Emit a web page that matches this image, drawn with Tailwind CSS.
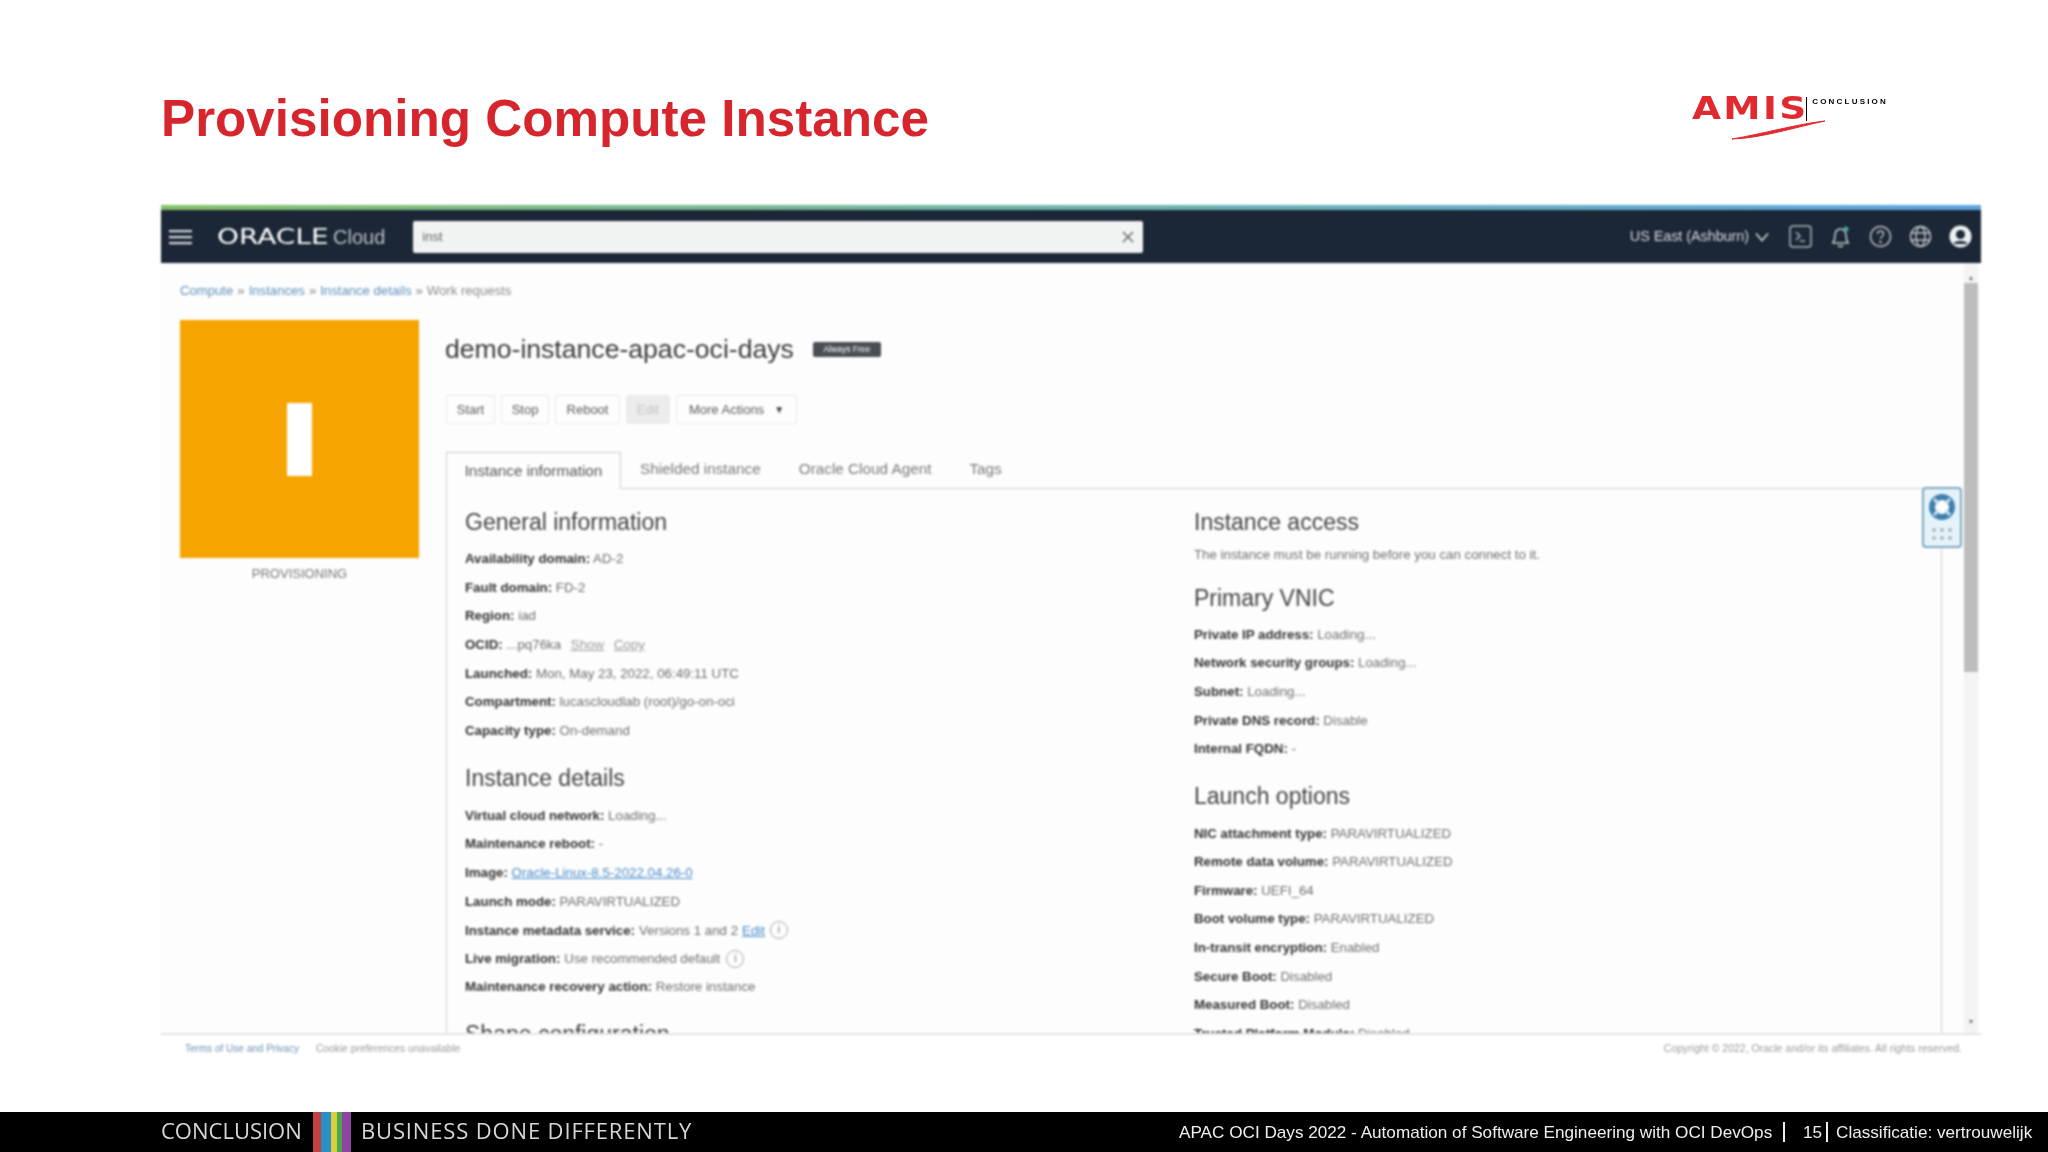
<!DOCTYPE html>
<html lang="en">
<head>
    <meta charset="UTF-8">
    <title>Provisioning Compute Instance</title>
    <script src="https://cdn.jsdelivr.net/npm/@tailwindcss/browser@4"></script>
</head>
<body class="bg-white">
<div class="w-[2048px] h-[1152px] overflow-hidden flex flex-col font-['Liberation_Sans',Arial,sans-serif]">

    <!-- slide header -->
    <div class="h-[205px] flex justify-between pl-[161px] pr-[160px]">
        <h1 class="mt-[87px] text-[51.2px] leading-[64px] font-bold text-[#d7252d]">Provisioning Compute Instance</h1>
        <!-- logo -->
        <div class="relative w-[196px] mt-[92px] h-[52px] blur-[0.4px]">
            <div class="flex items-start">
                <span class="w-[116px] text-[#e12a2f] text-[32px] leading-[32px] font-['DejaVu_Sans',sans-serif] font-bold tracking-[2px] scale-x-[1.17] origin-left">AMIS</span>
                <span class="w-px h-[24px] mt-[5px] bg-black"></span>
                <span class="ml-[5px] mt-[3px] text-[8px] leading-[14px] font-bold tracking-[2.2px] text-black">CONCLUSION</span>
            </div>
            <svg class="absolute left-0 top-0" width="196" height="52" viewBox="0 0 196 52"><path d="M40 47 C70 46 100 36 133 29 C105 32 70 42 40 47Z" fill="#e12a2f" stroke="#e12a2f" stroke-width="1"/></svg>
        </div>
    </div>

    <!-- console screenshot -->
    <div class="relative ml-[161px] w-[1820px] h-[907px] flex flex-col blur-[0.8px]">
        <div class="h-[5px] bg-gradient-to-r from-[#86c06a] to-[#5da4e0]"></div>

        <!-- top nav -->
        <div class="h-[53px] bg-[#1b2736] flex items-center text-[#d5d9dd]">
            <svg class="ml-[8px] w-[23px] h-[16px]" viewBox="0 0 23 16" fill="#d5d9dd"><rect width="23" height="2.2" y="1"/><rect width="23" height="2.2" y="7"/><rect width="23" height="2.2" y="13"/></svg>
            <span class="ml-[25px] mt-[2px] w-[116px] text-[21px] leading-none font-['DejaVu_Sans',sans-serif] text-white scale-x-[1.33] origin-left">ORACLE</span>
            <span class="mt-[1px] text-[20px] leading-none text-[#b9bfc5]">Cloud</span>
            <div class="ml-[28px] w-[730px] h-[32px] bg-[#f1f2f2] rounded-[2px] flex items-center justify-between pl-[9px] pr-[7px]">
                <span class="text-[13px] text-[#666]">inst</span>
                <svg class="w-[16px] h-[16px]" viewBox="0 0 16 16" stroke="#666" stroke-width="1.5" fill="none"><path d="M3 3l10 10M13 3L3 13"/></svg>
            </div>
            <span class="ml-[auto] text-[14.5px] text-[#d5d9dd] tracking-[-0.1px] mt-[1px]">US East (Ashburn)</span>
            <svg class="ml-[6px] w-[14px] h-[10px]" viewBox="0 0 14 10" fill="none" stroke="#d5d9dd" stroke-width="1.6"><path d="M1 1.500l6 7 6-7"/></svg>
            <svg class="ml-[20px] w-[23px] h-[23px]" viewBox="0 0 23 23" fill="none" stroke="#aeb4ba" stroke-width="1.5"><rect x="1" y="1" width="21" height="21" rx="3"/><path d="M7 7l4 4-4 4M11 16h5"/></svg>
            <svg class="ml-[18px] w-[21px] h-[23px]" viewBox="0 0 21 23" fill="none" stroke="#c3c8cd" stroke-width="1.6"><path d="M3 18c2-3 2-5 2-8 0-3 2-6 5.500-6s5.500 3 5.500 6c0 3 0 5 2 8z"/><path d="M8 20.500c1 1.500 4 1.500 5 0"/><circle cx="16" cy="4" r="2.500" fill="#47a896" stroke="none"/></svg>
            <svg class="ml-[18px] w-[23px] h-[23px]" viewBox="0 0 23 23" fill="none" stroke="#b8bdc3" stroke-width="1.5"><circle cx="11.500" cy="11.500" r="10"/><path d="M8.500 9c0-4 6-4 6 0 0 2.500-3 2.500-3 5"/><circle cx="11.500" cy="17" r="0.6"/></svg>
            <svg class="ml-[17px] w-[23px] h-[23px]" viewBox="0 0 23 23" fill="none" stroke="#c3c8cd" stroke-width="1.4"><circle cx="11.500" cy="11.500" r="10"/><ellipse cx="11.500" cy="11.500" rx="4.500" ry="10"/><path d="M2 8h19M2 15h19"/></svg>
            <svg class="ml-[17px] mr-[9px] w-[23px] h-[23px]" viewBox="0 0 23 23"><circle cx="11.500" cy="11.500" r="11" fill="#eef0f1"/><circle cx="11.500" cy="9.500" r="4.500" fill="#1b2736"/><path d="M4.500 19c1-4 13-4 14 0z" fill="#1b2736"/></svg>
        </div>

        <!-- body -->
        <div class="h-[770px] flex overflow-hidden bg-[#fdfdfd]">
            <div class="w-[1781px] pl-[19px]">
                <div class="h-[54px] pt-[1px] flex items-center gap-[4px] text-[13.15px] text-[#5e90bd]">
                    <span>Compute</span><span class="text-[#888]">»</span><span>Instances</span><span class="text-[#888]">»</span><span>Instance details</span><span class="text-[#888]">»</span><span class="text-[#8b8b8b]">Work requests</span>
                </div>
                <div class="flex">
                    <!-- state tile -->
                    <div class="w-[239px] mr-[27px] shrink-0">
                        <div class="h-[238px] mt-[3px] bg-[#f5a400] flex items-center justify-center">
                            <div class="w-[25px] h-[73px] bg-white mr-[1px]"></div>
                        </div>
                        <div class="mt-[8px] text-center text-[13px] leading-[16px] text-[#777]">PROVISIONING</div>
                    </div>

                    <div class="w-[1496px]">
                        <div class="h-[32px] mt-[16px] flex items-center">
                            <h2 class="text-[26.6px] text-[#3b3b3b] leading-[32px] ml-[-1px]">demo-instance-apac-oci-days</h2>
                            <span class="ml-[19px] w-[68px] h-[15px] bg-[#4a4f55] rounded-[2px] text-white text-[8.5px] leading-[15px] text-center">Always Free</span>
                        </div>
                        <div class="mt-[30px] flex gap-[6px] text-[13px] text-[#5c5c5c]">
                            <div class="w-[49px] h-[29px] flex items-center justify-center border border-[#e8e8e8] rounded-[2px]">Start</div>
                            <div class="w-[48px] h-[29px] flex items-center justify-center border border-[#e8e8e8] rounded-[2px]">Stop</div>
                            <div class="w-[65px] h-[29px] flex items-center justify-center border border-[#e8e8e8] rounded-[2px]">Reboot</div>
                            <div class="w-[44px] h-[29px] flex items-center justify-center bg-[#ececec] text-[#c4c4c4] rounded-[2px]">Edit</div>
                            <div class="w-[121px] h-[29px] flex items-center justify-center gap-[10px] border border-[#e8e8e8] rounded-[2px]">More Actions <span class="text-[10px] text-[#444]">▼</span></div>
                        </div>

                        <!-- tabs -->
                        <div class="mt-[28px] h-[37px] flex border-b border-[#cfcfcf] text-[15.3px] text-[#7a7a7a]">
                            <div class="w-[175px] h-[37px] flex items-center justify-center bg-[#fdfdfd] border border-b-0 border-[#cfcfcf] text-[#555]">Instance information</div>
                            <div class="ml-[19px] h-[35px] flex items-center">Shielded instance</div>
                            <div class="ml-[38px] h-[35px] flex items-center">Oracle Cloud Agent</div>
                            <div class="ml-[38px] h-[35px] flex items-center">Tags</div>
                        </div>

                        <!-- details -->
                        <div class="h-[560px] border-x border-[#cfcfcf] pl-[18px] grid grid-cols-[729px_1fr] text-[13.3px] text-[#6f6f6f]">
                            <div>
                                <h3 class="mt-[18px] mb-[8px] h-[30px] text-[23px] leading-[30px] text-[#444]">General information</h3>
                                <p class="h-[28.7px] leading-[28.7px]"><b class="text-[#333]">Availability domain:</b> AD-2</p>
                                <p class="h-[28.7px] leading-[28.7px]"><b class="text-[#333]">Fault domain:</b> FD-2</p>
                                <p class="h-[28.7px] leading-[28.7px]"><b class="text-[#333]">Region:</b> iad</p>
                                <p class="h-[28.7px] leading-[28.7px]"><b class="text-[#333]">OCID:</b> ...pq76ka <span class="ml-[6px] underline text-[#9a9a9a]">Show</span> <span class="ml-[6px] underline text-[#9a9a9a]">Copy</span></p>
                                <p class="h-[28.7px] leading-[28.7px]"><b class="text-[#333]">Launched:</b> Mon, May 23, 2022, 06:49:11 UTC</p>
                                <p class="h-[28.7px] leading-[28.7px]"><b class="text-[#333]">Compartment:</b> lucascloudlab (root)/go-on-oci</p>
                                <p class="h-[28.7px] leading-[28.7px]"><b class="text-[#333]">Capacity type:</b> On-demand</p>
                                <h3 class="mt-[17px] mb-[9px] h-[30px] text-[23px] leading-[30px] text-[#444]">Instance details</h3>
                                <p class="h-[28.6px] leading-[28.6px]"><b class="text-[#333]">Virtual cloud network:</b> Loading...</p>
                                <p class="h-[28.6px] leading-[28.6px]"><b class="text-[#333]">Maintenance reboot:</b> -</p>
                                <p class="h-[28.6px] leading-[28.6px]"><b class="text-[#333]">Image:</b> <span class="underline text-[#4a8ccb]">Oracle-Linux-8.5-2022.04.26-0</span></p>
                                <p class="h-[28.6px] leading-[28.6px]"><b class="text-[#333]">Launch mode:</b> PARAVIRTUALIZED</p>
                                <p class="h-[28.6px] flex items-center gap-[4px]"><b class="text-[#333]">Instance metadata service:</b> Versions 1 and 2 <span class="underline text-[#4a8ccb]">Edit</span><span class="ml-[1px] w-[18px] h-[18px] rounded-full border border-[#aaa] text-[10px] leading-[16px] text-center">i</span></p>
                                <p class="h-[28.6px] flex items-center gap-[4px]"><b class="text-[#333]">Live migration:</b> Use recommended default<span class="ml-[2px] w-[18px] h-[18px] rounded-full border border-[#aaa] text-[10px] leading-[16px] text-center">i</span></p>
                                <p class="h-[28.6px] leading-[28.6px]"><b class="text-[#333]">Maintenance recovery action:</b> Restore instance</p>
                                <h3 class="mt-[17px] h-[30px] text-[23px] leading-[30px] text-[#444]">Shape configuration</h3>
                            </div>
                            <div>
                                <h3 class="mt-[18px] h-[30px] text-[23px] leading-[30px] text-[#444]">Instance access</h3>
                                <p class="mt-[4px] h-[28.7px] leading-[28.7px]">The instance must be running before you can connect to it.</p>
                                <h3 class="mt-[13px] mb-[8px] h-[30px] text-[23px] leading-[30px] text-[#444]">Primary VNIC</h3>
                                <p class="h-[28.7px] leading-[28.7px]"><b class="text-[#333]">Private IP address:</b> Loading...</p>
                                <p class="h-[28.7px] leading-[28.7px]"><b class="text-[#333]">Network security groups:</b> Loading...</p>
                                <p class="h-[28.7px] leading-[28.7px]"><b class="text-[#333]">Subnet:</b> Loading...</p>
                                <p class="h-[28.7px] leading-[28.7px]"><b class="text-[#333]">Private DNS record:</b> Disable</p>
                                <p class="h-[28.7px] leading-[28.7px]"><b class="text-[#333]">Internal FQDN:</b> -</p>
                                <h3 class="mt-[17px] mb-[8.5px] h-[30px] text-[23px] leading-[30px] text-[#444]">Launch options</h3>
                                <p class="h-[28.6px] leading-[28.6px]"><b class="text-[#333]">NIC attachment type:</b> PARAVIRTUALIZED</p>
                                <p class="h-[28.6px] leading-[28.6px]"><b class="text-[#333]">Remote data volume:</b> PARAVIRTUALIZED</p>
                                <p class="h-[28.6px] leading-[28.6px]"><b class="text-[#333]">Firmware:</b> UEFI_64</p>
                                <p class="h-[28.6px] leading-[28.6px]"><b class="text-[#333]">Boot volume type:</b> PARAVIRTUALIZED</p>
                                <p class="h-[28.6px] leading-[28.6px]"><b class="text-[#333]">In-transit encryption:</b> Enabled</p>
                                <p class="h-[28.6px] leading-[28.6px]"><b class="text-[#333]">Secure Boot:</b> Disabled</p>
                                <p class="h-[28.6px] leading-[28.6px]"><b class="text-[#333]">Measured Boot:</b> Disabled</p>
                                <p class="h-[28.6px] leading-[28.6px]"><b class="text-[#333]">Trusted Platform Module:</b> Disabled</p>
                            </div>
                        </div>
                    </div>
                </div>
            </div>

            <!-- scrollbar -->
            <div class="w-[39px] pl-[22px] pr-[3px] flex flex-col items-center text-[#777]">
                <div class="w-full bg-[#f4f4f4] h-full flex flex-col items-center">
                    <span class="mt-[9px] h-[11px] text-[7px] leading-[11px]">▲</span>
                    <div class="w-full h-[389px] bg-[#bdbdbd]"></div>
                    <span class="mt-[auto] mb-[6px] h-[11px] text-[7px] leading-[11px]">▼</span>
                </div>
            </div>
        </div>

        <!-- console footer -->
        <div class="h-[30px] pb-[1px] border-t-2 border-[#e4e4e4] flex items-center justify-between pl-[24px] pr-[19px] text-[10px] text-[#9a9a9a] bg-white">
            <div><span class="text-[#6f92b3]">Terms of Use and Privacy</span><span class="ml-[17px] text-[10.3px]">Cookie preferences unavailable</span></div>
            <span class="text-[10.5px]">Copyright © 2022, Oracle and/or its affiliates. All rights reserved.</span>
        </div>

        <!-- help widget -->
        <div class="absolute left-[1761px] top-[282px] w-[40px] h-[61px] bg-[#e4f3fb] border-2 border-[#7ea6bd] rounded-[4px] flex flex-col items-center pt-[4px]">
            <svg class="w-[28px] h-[28px]" viewBox="0 0 28 28" fill="none"><circle cx="14" cy="14" r="10" fill="#fff" stroke="#3f7fae" stroke-width="6"/><path d="M6 6l5 5M22 6l-5 5M6 22l5-5M22 22l-5-5" stroke="#cfe6f3" stroke-width="3"/></svg>
            <div class="mt-[7px] grid grid-cols-3 gap-x-[4px] gap-y-[4px]">
                <span class="w-[4px] h-[4px] rounded-full bg-[#b5b5b5]"></span><span class="w-[4px] h-[4px] rounded-full bg-[#b5b5b5]"></span><span class="w-[4px] h-[4px] rounded-full bg-[#b5b5b5]"></span>
                <span class="w-[4px] h-[4px] rounded-full bg-[#b5b5b5]"></span><span class="w-[4px] h-[4px] rounded-full bg-[#b5b5b5]"></span><span class="w-[4px] h-[4px] rounded-full bg-[#b5b5b5]"></span>
            </div>
        </div>
    </div>

    <!-- slide footer -->
    <div class="h-[40px] bg-black flex items-center pl-[161px] text-[#d6d6d6] blur-[0.3px]">
        <span class="w-[152px] mb-[3px] text-[22px] font-['Open_Sans',sans-serif]">CONCLUSION</span>
        <div class="w-[38px] h-[40px] flex">
            <div class="w-[8px] bg-[#c4413f]"></div><div class="w-[10px] bg-[#2a8fc4]"></div><div class="w-[6px] bg-[#d9cf3b]"></div><div class="w-[5px] bg-[#4ca64c]"></div><div class="w-[9px] bg-[#8e44a0]"></div>
        </div>
        <span class="ml-[10px] w-[340px] mb-[3px] text-[22px] tracking-[0.85px] whitespace-nowrap font-['Open_Sans',sans-serif]">BUSINESS DONE DIFFERENTLY</span>
        <span class="ml-[478px] w-[594px] mt-[1px] text-[17.15px] text-[#eee] whitespace-nowrap">APAC OCI Days 2022 - Automation of Software Engineering with OCI DevOps</span>
        <span class="ml-[10px] w-[2px] h-[20px] bg-[#eee]"></span>
        <span class="ml-[18px] w-[23px] mt-[1px] text-[17.15px] text-[#eee]">15</span>
        <span class="w-[2px] h-[20px] bg-[#eee]"></span>
        <span class="ml-[8px] mt-[1px] text-[17.15px] text-[#eee] whitespace-nowrap">Classificatie: vertrouwelijk</span>
    </div>
</div>
</body>
</html>
